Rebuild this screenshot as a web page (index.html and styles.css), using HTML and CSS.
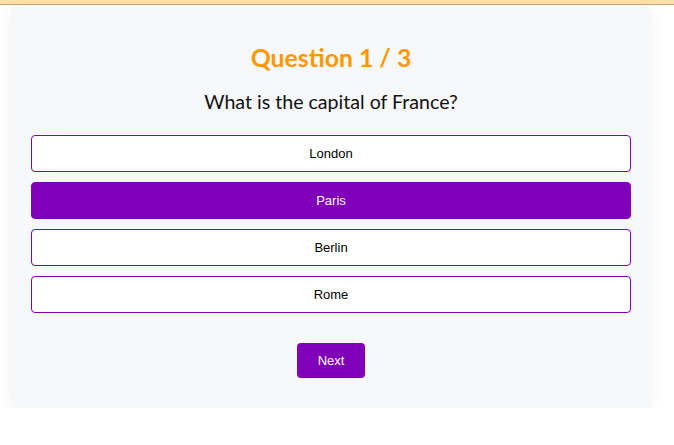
FILE: index.html
```html
<!DOCTYPE html>
<html lang="en">
<head>
<meta charset="utf-8">
<title>Quiz</title>
<link rel="stylesheet" href="styles.css">
</head>
<body>
<div class="topbar"></div>
<main class="card">
  <h2 class="title">Question 1 / 3</h2>
  <p class="question">What is the capital of France?</p>
  <div class="options">
    <button class="option">London</button>
    <button class="option selected">Paris</button>
    <button class="option">Berlin</button>
    <button class="option">Rome</button>
  </div>
  <div class="actions">
    <button class="next">Next</button>
  </div>
</main>
</body>
</html>
```
FILE: styles.css
```css
html, body {
  margin: 0;
  padding: 0;
  background: #ffffff;
}
body {
  font-family: "Liberation Sans", Arial, sans-serif;
}
.topbar {
  height: 4px;
  background: #fde0a8;
  border-bottom: 1px solid #d2a46e;
}
.card {
  margin: 0 0 0 11px;
  width: 640px;
  box-sizing: border-box;
  padding: 20px 20px 30px;
  background: #f7f8fa;
  border-radius: 8px;
  box-shadow: 0 4px 12px rgba(0, 0, 0, 0.06);
}
.title {
  margin: 19px 0 0;
  font-family: Lato, "Open Sans", sans-serif;
  font-weight: 700;
  font-size: 24.8px;
  line-height: 28px;
  color: #ff9800;
  text-align: center;
}
.question {
  margin: 19px 0 0;
  font-family: Lato, "Open Sans", sans-serif;
  font-size: 19.6px;
  line-height: 22px;
  color: #111;
  text-align: center;
}
.options {
  margin-top: 22px;
  display: flex;
  flex-direction: column;
  gap: 10px;
}
.option {
  height: 37px;
  width: 100%;
  border: 1px solid #7f00b8;
  border-radius: 4px;
  background: #ffffff;
  color: #000;
  font-family: "Liberation Sans", Arial, sans-serif;
  font-size: 13px;
  cursor: pointer;
}
.option.selected {
  background: #7f00b8;
  color: #ffffff;
}
.actions {
  margin-top: 30px;
  display: flex;
  justify-content: center;
}
.next {
  height: 35px;
  width: 68px;
  padding: 0;
  border: none;
  border-radius: 4px;
  background: #7f00b8;
  color: #ffffff;
  font-family: "Liberation Sans", Arial, sans-serif;
  font-size: 13px;
}
```
